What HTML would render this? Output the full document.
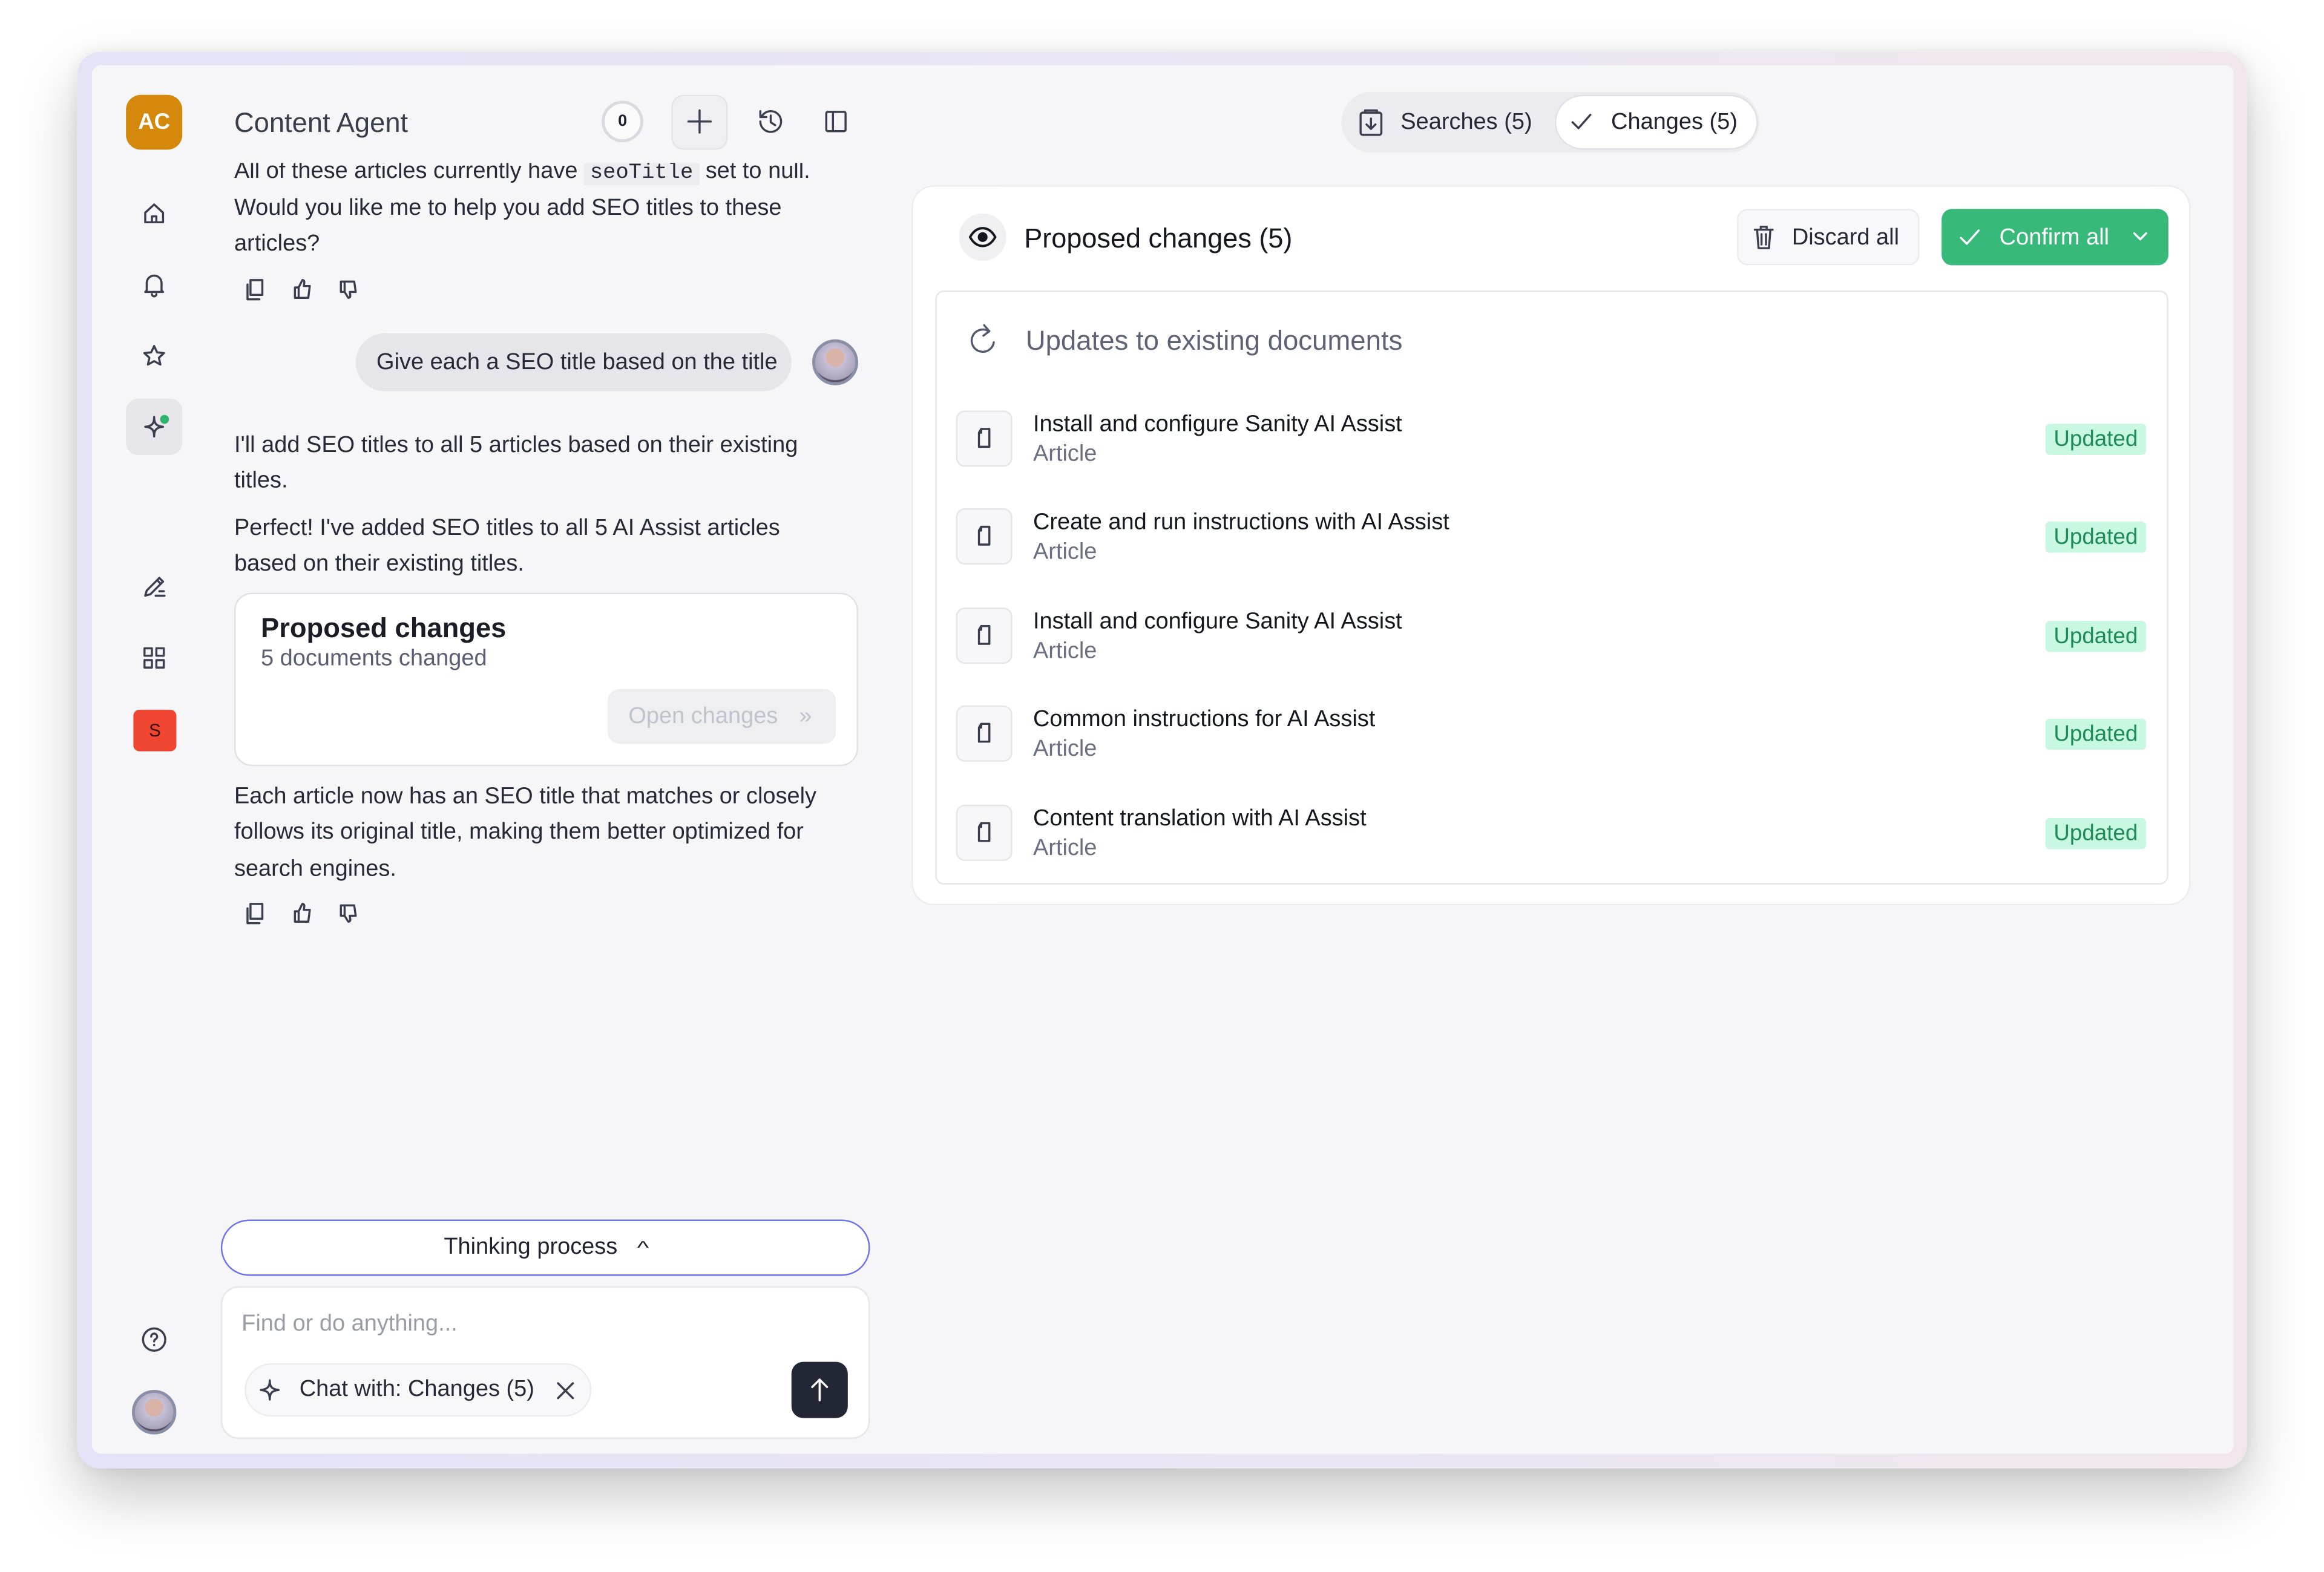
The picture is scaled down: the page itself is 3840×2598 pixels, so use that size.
<!DOCTYPE html>
<html><head><meta charset="utf-8"><style>
*{box-sizing:border-box;margin:0;padding:0}
html,body{width:3840px;height:2597px;overflow:hidden;background:#fff}
#c{position:absolute;left:0;top:0;width:1568px;height:1061px;transform:scale(2.44898);transform-origin:0 0;font-family:"Liberation Sans",sans-serif;color:#1f2230}
.a{position:absolute}
.t{position:absolute;font-size:15.5px;line-height:24px;color:#262936;white-space:nowrap}
svg{position:absolute;fill:none;stroke:#3a3e4e;stroke-width:1.4;stroke-linecap:round;stroke-linejoin:round}
.row .ib{position:absolute;left:645px;width:38px;height:38px;border:1px solid #e6e6ea;border-radius:6px;background:#f7f7f9}
.badge{position:absolute;left:1380px;width:68px;height:21px;background:#c8f8e1;color:#1d8a58;border-radius:3px;font-size:15px;line-height:21px;text-align:center}
</style></head><body><div id="c">
<div class="a" style="left:52px;top:35px;width:1464px;height:956px;border-radius:16px;background:linear-gradient(90deg,#e3e2f6,#ebe6f3 60%,#f1e6ec);box-shadow:0 18px 40px rgba(0,0,0,.22),0 0 12px rgba(0,0,0,.08)"></div>
<div class="a" style="left:62px;top:44px;width:1445px;height:937px;border-radius:6px;background:#f6f6f8;overflow:hidden"></div>
<!-- sidebar -->
<div class="a" style="left:85px;top:64px;width:38px;height:37px;border-radius:10px;background:#d4880c;color:#fff;font-size:15px;font-weight:bold;text-align:center;line-height:37px">AC</div>
<svg style="left:96px;top:136px" width="16" height="16" viewBox="0 0 16 16"><path d="M2 7.5L8 2l6 5.5V14H2z M6.5 14V10h3v4"/></svg>
<svg style="left:96px;top:184px" width="16" height="17" viewBox="0 0 16 17"><path d="M3 12V7a5 5 0 0110 0v5l1 1H2z M6.5 14.5a1.5 1.5 0 003 0"/></svg>
<svg style="left:96px;top:232px" width="16" height="16" viewBox="0 0 16 16"><path d="M8 1.5l2 4.3 4.6.5-3.4 3.1 1 4.6L8 11.7 3.8 14l1-4.6L1.4 6.3 6 5.8z"/></svg>
<div class="a" style="left:85px;top:269px;width:38px;height:38px;border-radius:8px;background:#e6e6eb"></div>
<svg style="left:95px;top:279px" width="18" height="18" viewBox="0 0 18 18"><path d="M9 2.5C9 7 7.5 8.5 3 9c4.5.5 6 2 6 6.5C9 11 10.5 9.5 15 9 10.5 8.5 9 7 9 2.5z"/></svg>
<div class="a" style="left:108px;top:280px;width:6px;height:6px;border-radius:3px;background:#2fb36d"></div>
<svg style="left:95px;top:387px" width="18" height="18" viewBox="0 0 18 18"><path d="M3 15l1-3.5L12.5 3l2.5 2.5L6.5 14z M11 4.5l2.5 2.5 M10 15h6 M12.5 12h3"/></svg>
<svg style="left:96px;top:436px" width="16" height="16" viewBox="0 0 16 16"><rect x="1.5" y="1.5" width="5" height="5"/><rect x="9.5" y="1.5" width="5" height="5"/><rect x="1.5" y="9.5" width="5" height="5"/><rect x="9.5" y="9.5" width="5" height="5"/></svg>
<div class="a" style="left:90px;top:479px;width:29px;height:28px;border-radius:4px;background:#f04530;color:#3a0f0a;font-size:12px;text-align:center;line-height:28px">S</div>
<svg style="left:95px;top:895px" width="18" height="18" viewBox="0 0 18 18"><circle cx="9" cy="9" r="7.5"/><path d="M7 7a2 2 0 113 1.7c-.7.4-1 .8-1 1.5 M9 12.6v.2"/></svg>
<div class="a" style="left:89px;top:938px;width:30px;height:30px;border-radius:15px;border:2px solid #8a8fa8;background:radial-gradient(circle at 50% 38%,#d9b2a8 0 28%,#c7c0d6 30%,#a9a3b9 70%,#59506a 72%)"></div>
<!-- header -->
<div class="a" style="left:158px;top:71px;font-size:18.5px;line-height:24px;color:#3a3d4a">Content Agent</div>
<div class="a" style="left:406px;top:68px;width:28px;height:28px;border-radius:14px;border:2px solid #d9d9e0;background:#fafafb;font-size:11px;font-weight:bold;text-align:center;line-height:24px">0</div>
<div class="a" style="left:453px;top:64px;width:38px;height:37px;border-radius:8px;border:1px solid #e3e3e8;background:#efeff3"></div>
<svg style="left:463px;top:73px" width="18" height="18" viewBox="0 0 18 18"><path d="M9 1.5v15 M1.5 9h15"/></svg>
<svg style="left:510px;top:73px" width="19" height="18" viewBox="0 0 19 18"><path d="M3 9a7 7 0 107-7A7 7 0 004 5.5 M3 2v4h4 M10 5v4.5l3 2"/></svg>
<svg style="left:556px;top:74px" width="16" height="16" viewBox="0 0 16 16"><rect x="1.5" y="1.5" width="13" height="13" rx="1"/><path d="M6 1.5v13"/></svg>
<!-- chat -->
<div class="a" style="left:150px;top:110px;width:440px;height:20px;overflow:hidden"><div class="t" style="left:8px;top:-6px">All of these articles currently have <span style="font-family:'Liberation Mono',monospace;background:#ececf0;padding:0 4px;font-size:14.5px">seoTitle</span> set to null.</div></div>
<div class="t" style="left:158px;top:129px">Would you like me to help you add SEO titles to these</div>
<div class="t" style="left:158px;top:153px">articles?</div>
<svg style="left:165px;top:188px" width="14" height="15" viewBox="0 0 14 15"><rect x="4" y="1" width="8" height="10"/><path d="M2 4v10h8"/></svg>
<svg style="left:197px;top:188px" width="14" height="14" viewBox="0 0 14 14"><path d="M2 6h2.5v7H2z M4.5 6l2.5-5c1 0 1.5.7 1.3 1.8L8 5h4l-1 8H4.5"/></svg>
<svg style="left:228px;top:189px" width="14" height="14" viewBox="0 0 14 14"><path d="M2 1h2.5v7H2z M4.5 1H11l1 7H8l.3 2.2c.2 1.1-.3 1.8-1.3 1.8L4.5 8"/></svg>
<div class="a" style="left:240px;top:225px;width:294px;height:39px;border-radius:20px;background:#e5e5ea"></div>
<div class="t" style="left:254px;top:233px">Give each a SEO title based on the title</div>
<div class="a" style="left:548px;top:229px;width:31px;height:31px;border-radius:16px;border:2px solid #8a8fa8;background:radial-gradient(circle at 50% 38%,#d9b2a8 0 28%,#c7c0d6 30%,#a9a3b9 70%,#59506a 72%)"></div>
<div class="t" style="left:158px;top:289px">I'll add SEO titles to all 5 articles based on their existing</div>
<div class="t" style="left:158px;top:313px">titles.</div>
<div class="t" style="left:158px;top:345px">Perfect! I've added SEO titles to all 5 AI Assist articles</div>
<div class="t" style="left:158px;top:369px">based on their existing titles.</div>
<div class="a" style="left:158px;top:400px;width:421px;height:117px;border-radius:12px;background:#fff;border:1px solid #e0e0e6"></div>
<div class="a" style="left:176px;top:413px;font-size:18.5px;line-height:22px;font-weight:bold;color:#1a1c26">Proposed changes</div>
<div class="a" style="left:176px;top:436px;font-size:15.5px;line-height:18px;color:#5a5e72">5 documents changed</div>
<div class="a" style="left:410px;top:465px;width:154px;height:37px;border-radius:8px;background:#efeff2;color:#c0c2cc;font-size:15.5px;line-height:37px;padding-left:14px">Open changes <span style="margin-left:10px">»</span></div>
<div class="t" style="left:158px;top:526px">Each article now has an SEO title that matches or closely</div>
<div class="t" style="left:158px;top:550px">follows its original title, making them better optimized for</div>
<div class="t" style="left:158px;top:575px">search engines.</div>
<svg style="left:165px;top:609px" width="14" height="15" viewBox="0 0 14 15"><rect x="4" y="1" width="8" height="10"/><path d="M2 4v10h8"/></svg>
<svg style="left:197px;top:609px" width="14" height="14" viewBox="0 0 14 14"><path d="M2 6h2.5v7H2z M4.5 6l2.5-5c1 0 1.5.7 1.3 1.8L8 5h4l-1 8H4.5"/></svg>
<svg style="left:228px;top:610px" width="14" height="14" viewBox="0 0 14 14"><path d="M2 1h2.5v7H2z M4.5 1H11l1 7H8l.3 2.2c.2 1.1-.3 1.8-1.3 1.8L4.5 8"/></svg>
<!-- bottom input -->
<div class="a" style="left:149px;top:823px;width:438px;height:38px;border-radius:20px;background:#fff;border:1.5px solid #6b72ef;text-align:center;font-size:15.5px;line-height:35px;color:#1f2230">Thinking process <span style="display:inline-block;margin-left:10px;transform:scaleX(1.4);font-size:12px">^</span></div>
<div class="a" style="left:149px;top:868px;width:438px;height:103px;border-radius:12px;background:#fff;border:1px solid #e6e6ea"></div>
<div class="t" style="left:163px;top:882px;color:#9a9ca8">Find or do anything...</div>
<div class="a" style="left:165px;top:920px;width:234px;height:36px;border-radius:18px;background:#f8f8fa;border:1px solid #ececf0"></div>
<svg style="left:173px;top:929px" width="18" height="18" viewBox="0 0 18 18"><path d="M9 2.5C9 7 7.5 8.5 3 9c4.5.5 6 2 6 6.5C9 11 10.5 9.5 15 9 10.5 8.5 9 7 9 2.5z"/></svg>
<div class="t" style="left:202px;top:926px;color:#262936">Chat with: Changes (5)</div>
<svg style="left:375px;top:932px" width="13" height="13" viewBox="0 0 13 13"><path d="M1.5 1.5l10 10 M11.5 1.5l-10 10"/></svg>
<div class="a" style="left:534px;top:919px;width:38px;height:38px;border-radius:8px;background:#232634"></div>
<svg style="left:545px;top:929px;stroke:#fff" width="16" height="18" viewBox="0 0 16 18"><path d="M8 16V2 M3 7l5-5 5 5"/></svg>
<!-- tabs -->
<div class="a" style="left:905px;top:62px;width:282px;height:41px;border-radius:21px;background:#ececf0"></div>
<svg style="left:916px;top:73px" width="18" height="19" viewBox="0 0 18 19"><rect x="2" y="3" width="14" height="15" rx="1.5"/><path d="M5 3V1.5h8V3 M9 7v7 M6 11l3 3 3-3"/></svg>
<div class="t" style="left:945px;top:71px;color:#262936">Searches (5)</div>
<div class="a" style="left:1049px;top:64px;width:137px;height:37px;border-radius:19px;background:#fff;border:1px solid #e0e0e6"></div>
<svg style="left:1059px;top:75px" width="16" height="14" viewBox="0 0 16 14"><path d="M2 7.5l4 4 8-9"/></svg>
<div class="t" style="left:1087px;top:71px;color:#1f2230">Changes (5)</div>
<!-- right card -->
<div class="a" style="left:616px;top:126px;width:861px;height:484px;border-radius:14px;background:#fff;box-shadow:0 0 0 1px #ececf0"></div>
<div class="a" style="left:647px;top:144px;width:32px;height:32px;border-radius:16px;background:#f0f0f3"></div>
<svg style="left:653px;top:151px;stroke:#15171f;stroke-width:1.6" width="20" height="18" viewBox="0 0 20 18"><path d="M1.5 9C4 4.5 7 3 10 3s6 1.5 8.5 6C16 13.5 13 15 10 15S4 13.5 1.5 9z"/><circle cx="10" cy="9" r="2.5" fill="#15171f"/></svg>
<div class="a" style="left:691px;top:149px;font-size:18.4px;line-height:24px;color:#15171f">Proposed changes (5)</div>
<div class="a" style="left:1172px;top:141px;width:123px;height:38px;border-radius:7px;background:#f8f8fa;border:1px solid #ebebef;font-size:15.5px;line-height:37px;padding-left:36px;color:#262936">Discard all</div>
<svg style="left:1182px;top:151px" width="16" height="18" viewBox="0 0 16 18"><path d="M2 4h12 M6 4V2h4v2 M3.5 4l1 12.5h7l1-12.5 M6.5 7v7 M9.5 7v7"/></svg>
<div class="a" style="left:1310px;top:141px;width:153px;height:38px;border-radius:7px;background:#37b97a;color:#fff;font-size:15.5px;line-height:39px;padding-left:39px">Confirm all</div>
<svg style="left:1321px;top:153px;stroke:#fff" width="16" height="14" viewBox="0 0 16 14"><path d="M2 7.5l4 4 8-9"/></svg>
<svg style="left:1438px;top:155px;stroke:#fff" width="12" height="9" viewBox="0 0 12 9"><path d="M2 2.5l4 4 4-4"/></svg>
<div class="a" style="left:631px;top:196px;width:832px;height:401px;border:1px solid #e6e6ea;border-radius:6px"></div>
<svg style="left:653px;top:218px;stroke:#545a6e" width="22" height="24" viewBox="0 0 22 24"><path d="M14 5.5A7.5 7.5 0 1017.5 13 M11 1.5l3.5 4-4 3"/></svg>
<div class="a" style="left:692px;top:218px;font-size:18.6px;line-height:24px;color:#5d6275">Updates to existing documents</div>
<div class="row">
<div class="ib" style="top:277px"></div><svg style="left:658px;top:288px" width="12" height="15" viewBox="0 0 12 15"><path d="M4 1.5h5.5v12h-7V4z M4 1.5V4H2.5"/></svg>
<div class="t" style="left:697px;top:275px;color:#15171f">Install and configure Sanity AI Assist</div><div class="t" style="left:697px;top:295px;color:#6b6f82">Article</div><div class="badge" style="top:286px">Updated</div>
</div>
<div class="row">
<div class="ib" style="top:343px"></div><svg style="left:658px;top:354px" width="12" height="15" viewBox="0 0 12 15"><path d="M4 1.5h5.5v12h-7V4z M4 1.5V4H2.5"/></svg>
<div class="t" style="left:697px;top:341px;color:#15171f">Create and run instructions with AI Assist</div><div class="t" style="left:697px;top:361px;color:#6b6f82">Article</div><div class="badge" style="top:352px">Updated</div>
</div>
<div class="row">
<div class="ib" style="top:410px"></div><svg style="left:658px;top:421px" width="12" height="15" viewBox="0 0 12 15"><path d="M4 1.5h5.5v12h-7V4z M4 1.5V4H2.5"/></svg>
<div class="t" style="left:697px;top:408px;color:#15171f">Install and configure Sanity AI Assist</div><div class="t" style="left:697px;top:428px;color:#6b6f82">Article</div><div class="badge" style="top:419px">Updated</div>
</div>
<div class="row">
<div class="ib" style="top:476px"></div><svg style="left:658px;top:487px" width="12" height="15" viewBox="0 0 12 15"><path d="M4 1.5h5.5v12h-7V4z M4 1.5V4H2.5"/></svg>
<div class="t" style="left:697px;top:474px;color:#15171f">Common instructions for AI Assist</div><div class="t" style="left:697px;top:494px;color:#6b6f82">Article</div><div class="badge" style="top:485px">Updated</div>
</div>
<div class="row">
<div class="ib" style="top:543px"></div><svg style="left:658px;top:554px" width="12" height="15" viewBox="0 0 12 15"><path d="M4 1.5h5.5v12h-7V4z M4 1.5V4H2.5"/></svg>
<div class="t" style="left:697px;top:541px;color:#15171f">Content translation with AI Assist</div><div class="t" style="left:697px;top:561px;color:#6b6f82">Article</div><div class="badge" style="top:552px">Updated</div>
</div>
</div></body></html>
